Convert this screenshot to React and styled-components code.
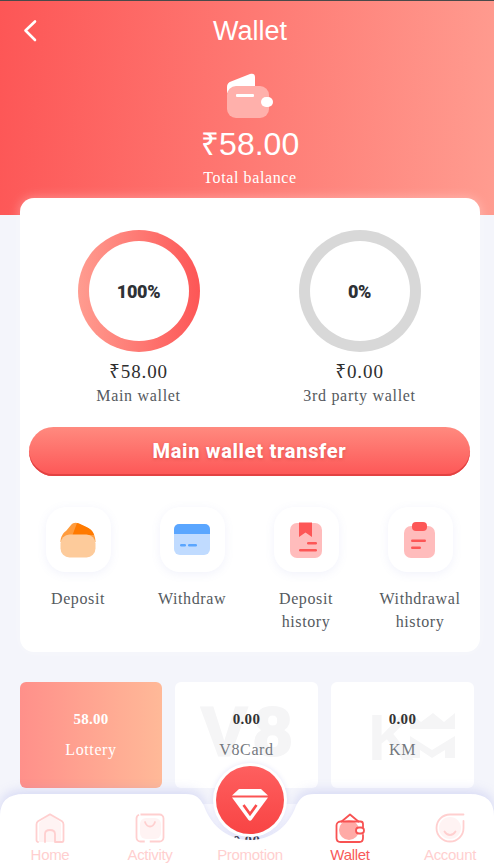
import React from 'react';
import styled, { createGlobalStyle } from 'styled-components';

const GlobalStyle = createGlobalStyle`
  html, body {
    margin: 0;
    padding: 0;
    height: 867px;
    overflow: hidden;
    background: #f4f5fb;
  }
`;

const serif = `"Liberation Serif", "Times New Roman", serif`;
const sans = `"Liberation Sans", Arial, sans-serif`;
const din = `Roboto, "Liberation Sans", sans-serif`;

const Page = styled.div`
  position: relative;
  width: 494px;
  height: 867px;
  overflow: hidden;
  background: #f4f5fb;
`;

const Header = styled.header`
  box-sizing: border-box;
  height: 215px;
  padding-left: 6px;
  border-top: 1px solid #4a4a4a;
  background: linear-gradient(94deg, #fd5656 0%, #ff9c90 100%);
  color: #fff;
  display: flex;
  flex-direction: column;
  align-items: center;
`;

const TitleBar = styled.div`
  position: relative;
  width: 100%;
  height: 60px;
  display: flex;
  align-items: center;
  justify-content: center;
`;

const BackButton = styled.button`
  position: absolute;
  left: 12px;
  top: 15px;
  width: 24px;
  height: 30px;
  padding: 0;
  border: 0;
  background: none;
  display: flex;
  align-items: center;
  justify-content: center;
`;

const Title = styled.h1`
  margin: 0;
  font: 400 27px/60px ${sans};
`;

const Rupee = styled.span`
  font-family: "Noto Sans", ${sans};
  line-height: 0;
`;

const Balance = styled.div`
  margin-top: 7px;
  font: 400 32px/38px ${sans};
`;

const BalanceLabel = styled.div`
  margin-top: 5px;
  font: 400 16px/20px ${serif};
  letter-spacing: 0.6px;
`;

const WalletCard = styled.section`
  position: relative;
  box-sizing: border-box;
  width: 460px;
  height: 454px;
  margin: -17px 0 0 20px;
  padding-top: 32px;
  background: #fff;
  border-radius: 14px;
  box-shadow: 0 0 12px rgba(255, 255, 255, 0.35);
`;

const RingRow = styled.div`
  display: grid;
  grid-template-columns: 221px 221px;
  padding-left: 8px;
`;

const RingColumn = styled.div`
  display: flex;
  flex-direction: column;
  align-items: center;
`;

const Ring = styled.div`
  box-sizing: border-box;
  width: 122px;
  height: 122px;
  padding: 11px;
  border-radius: 50%;
  background: ${(p) => (p.$active ? 'linear-gradient(90deg, #ff9c90, #fd5656)' : '#d8d8d8')};
`;

const RingInner = styled.div`
  width: 100%;
  height: 100%;
  border-radius: 50%;
  background: #fff;
  display: flex;
  align-items: center;
  justify-content: center;
  font: 900 18px ${din};
  letter-spacing: -0.3px;
  color: #2e3136;
`;

const Amount = styled.div`
  margin-top: 8px;
  font: 400 19px/24px ${serif};
  letter-spacing: 0.9px;
  color: #2f2f2f;
`;

const WalletName = styled.div`
  margin-top: 2px;
  font: 400 16px/20px ${serif};
  letter-spacing: 0.7px;
  color: #555a60;
`;

const TransferButton = styled.button`
  display: block;
  box-sizing: border-box;
  width: 441px;
  height: 49px;
  margin: 21px 0 0 9px;
  padding: 0 0 2px;
  border: 0;
  border-radius: 25px;
  background: linear-gradient(180deg, #ff8a7f 0%, #fd5656 100%);
  box-shadow: inset 0 -2px 0 #e24242;
  color: #fff;
  font: 800 20px ${din};
  letter-spacing: 0.7px;
  text-shadow: 0 1px 3px rgba(200, 50, 50, 0.5);
`;

const ActionRow = styled.div`
  display: grid;
  grid-template-columns: repeat(4, 114px);
  padding: 31px 0 0 1px;
`;

const Action = styled.div`
  display: flex;
  flex-direction: column;
  align-items: center;
`;

const ActionTile = styled.div`
  width: 65px;
  height: 65px;
  border-radius: 20px;
  background: #fff;
  box-shadow: 0 2px 10px rgba(120, 130, 220, 0.1);
  display: flex;
  align-items: center;
  justify-content: center;
`;

const ActionLabel = styled.div`
  margin-top: 15px;
  width: 100px;
  text-align: center;
  font: 400 16px/23px ${serif};
  letter-spacing: 0.6px;
  color: #555a60;
`;

const GameGrid = styled.div`
  display: grid;
  grid-template-columns: 142px 143px 143px;
  grid-auto-rows: 106px;
  gap: 16px 13px;
  margin: 30px 20px 0;
`;

const GameCard = styled.div`
  position: relative;
  overflow: hidden;
  border-radius: 6px;
  background: ${(p) => (p.$active ? 'linear-gradient(90deg, #ff908a, #ffb998)' : '#fff')};
  color: ${(p) => (p.$active ? '#fff' : '#333')};
  text-align: center;
  font-family: ${serif};
`;

const GameWatermark = styled.div`
  position: absolute;
  top: 13px;
  left: 0;
  right: 0;
  text-indent: 7px;
  text-align: center;
  font: 900 68px/72px ${sans};
  letter-spacing: 7px;
  -webkit-text-stroke: 3px #f5f5f6;
  color: #f5f5f6;
`;

const KmLetter = styled.div`
  position: absolute;
  left: 37px;
  top: 20px;
  font: 900 64px/72px ${sans};
  color: #f5f5f6;
`;

const KmMark = styled.svg`
  position: absolute;
  left: 79px;
  top: 31px;
`;

const GameValue = styled.div`
  position: relative;
  margin-top: 27px;
  font-size: 15px;
  font-weight: 700;
  line-height: 20px;
  letter-spacing: 0.3px;
`;

const GameName = styled.div`
  position: relative;
  margin-top: 10px;
  font-size: 16px;
  line-height: 22px;
  letter-spacing: 0.6px;
  color: ${(p) => (p.$active ? '#fff' : '#74787e')};
`;

const Nav = styled.nav`
  position: absolute;
  left: 0;
  bottom: 0;
  width: 494px;
  height: 73px;
  display: grid;
  grid-template-columns: repeat(5, 100px);
`;

const NavShape = styled.svg`
  position: absolute;
  left: 0;
  top: 0;
  filter: drop-shadow(0 -3px 6px rgba(105, 115, 225, 0.22));
`;

const NavItem = styled.div`
  position: relative;
  display: flex;
  flex-direction: column;
  align-items: center;
  padding-top: 19px;
  font: 400 15px/18px ${sans};
  letter-spacing: -0.3px;
  color: ${(p) => (p.$active ? '#f85a5a' : '#ffcfcf')};
`;

const NavIcon = styled.svg`
  display: block;
  margin-bottom: 3px;
`;

const NavSpacer = styled.div`
  width: 30px;
  height: 30px;
  margin-bottom: 3px;
`;

const PromoButton = styled.div`
  position: absolute;
  left: 216px;
  top: -28px;
  width: 68px;
  height: 68px;
  border-radius: 50%;
  background: linear-gradient(180deg, #fe5f5f, #f84444);
  box-shadow: 0 0 0 3px #fff, 0 0 4px 4px rgba(120, 130, 225, 0.14);
  display: flex;
  align-items: center;
  justify-content: center;
`;

const Diamond = styled.svg`
  display: block;
  margin-top: 10px;
`;

const BackIcon = () => (
  <svg width="16" height="24" viewBox="0 0 16 24" fill="none">
    <path d="M13 2.500 3.500 11.500 13 21" stroke="#fff" strokeWidth="2.600" strokeLinecap="round" strokeLinejoin="round" />
  </svg>
);

const BalanceIcon = () => (
  <svg width="46" height="45" viewBox="0 0 46 45" style={{ display: 'block', marginTop: 12 }}>
    <path d="M0 14C0 11 1.500 9.500 4 8.500L23 1C26 0 28 1 28 4V20H0Z" fill="#fff" />
    <rect x="0" y="13" width="42" height="32" rx="9" fill="#ffb0ab" />
    <rect x="9" y="21" width="18" height="3" rx="1" fill="#fff" />
    <rect x="34" y="24" width="12" height="10" rx="5" fill="#fff" />
  </svg>
);

const DepositIcon = () => (
  <svg width="40" height="40" viewBox="0 0 40 40">
    <path d="M2.500 22C2.500 17 5 13 8 11L13 5C15 2.500 18 2 20.500 3.500L29 7.500C34.500 10 37.500 15 37.500 22Z" fill="#ff9c3e" />
    <path d="M19 3 14.500 15H36C35 11 32 8.500 28 6.800L21 3.500Z" fill="#ff7a00" />
    <rect x="2.500" y="14.500" width="35" height="23" rx="9" fill="#fdcb9b" />
  </svg>
);

const WithdrawIcon = () => (
  <svg width="40" height="40" viewBox="0 0 40 40">
    <path d="M2 9a5 5 0 0 1 5-5h26a5 5 0 0 1 5 5v5H2Z" fill="#5aa6ff" />
    <path d="M2 14h36v15a6 6 0 0 1-6 6H8a6 6 0 0 1-6-6Z" fill="#c0dbff" />
    <rect x="8" y="24" width="6" height="2.400" rx="1.200" fill="#5aa6ff" />
    <rect x="16" y="24" width="9" height="2.400" rx="1.200" fill="#5aa6ff" />
  </svg>
);

const DepositHistoryIcon = () => (
  <svg width="40" height="40" viewBox="0 0 40 40">
    <rect x="4" y="3" width="32" height="35" rx="7" fill="#ffbcbc" />
    <path d="M13 2.500H26V17L19.500 12.500 13 17Z" fill="#fd5656" />
    <rect x="21" y="22" width="10" height="2.400" rx="1.200" fill="#fd5656" />
    <rect x="13" y="29" width="18" height="2.400" rx="1.200" fill="#fd5656" />
  </svg>
);

const WithdrawHistoryIcon = () => (
  <svg width="40" height="40" viewBox="0 0 40 40">
    <rect x="4" y="6" width="31" height="32" rx="7" fill="#ffbcbc" />
    <rect x="12" y="2" width="15" height="9" rx="4" fill="#fd5656" />
    <rect x="11" y="19.500" width="15" height="2.400" rx="1.200" fill="#fd5656" />
    <rect x="11" y="26.500" width="10" height="2.400" rx="1.200" fill="#fd5656" />
  </svg>
);

const HomeIcon = () => (
  <NavIcon width="30" height="30" viewBox="0 0 30 30" fill="none">
    <path d="M4 29V11c0-1 .5-1.700 1.200-2.200L15 1.500l9.800 7.300c.7.5 1.200 1.200 1.200 2.200v18" fill="#fff3f3" stroke="none" />
    <path d="M3 29C2 29 1.500 28 1.500 27V11.500C1.500 10 2 9 3 8.300L15 1.300 27 8.300C28 9 28.500 10 28.500 11.500V27C28.500 28 28 29 27 29H20V21C20 18.500 18 17 15 17S10 18.500 10 21V29" stroke="#ffcfcf" strokeWidth="1.800" strokeLinejoin="round" strokeLinecap="round" />
  </NavIcon>
);

const ActivityIcon = () => (
  <NavIcon width="30" height="30" viewBox="0 0 30 30" fill="none">
    <rect x="5" y="5" width="21" height="21" rx="6" fill="#fff3f3" />
    <rect x="1.500" y="1.500" width="27" height="27" rx="4" stroke="#ffcfcf" strokeWidth="1.800" strokeDasharray="60 5 34" />
    <path d="M10 9C11 12 13 13.500 15 13.500S19 12 20 9" stroke="#ffcfcf" strokeWidth="1.800" strokeLinecap="round" />
  </NavIcon>
);

const WalletNavIcon = () => (
  <NavIcon width="30" height="30" viewBox="0 0 30 30" fill="none">
    <circle cx="14" cy="17" r="10" fill="#ffaaa6" />
    <path d="M6 9 15 1.500 24 9" stroke="#f85252" strokeWidth="1.800" strokeLinejoin="round" />
    <path d="M28 14V11C28 9.500 27 8.500 25.500 8.500H5.500C3 8.500 1.500 10.500 1.500 12.500V25C1.500 27.500 3 29 5.500 29H24.500C27 29 28 27.500 28 25V22" stroke="#f85252" strokeWidth="1.800" strokeLinecap="round" />
    <rect x="21" y="14.500" width="8" height="6" rx="3" fill="#fff" stroke="#f85252" strokeWidth="1.800" />
  </NavIcon>
);

const AccountIcon = () => (
  <NavIcon width="30" height="30" viewBox="0 0 30 30" fill="none">
    <circle cx="15" cy="15" r="11" fill="#fff3f3" />
    <path d="M28.500 1.500H15C7.500 1.500 1.500 7.500 1.500 15S7.500 28.500 15 28.500 28.500 22.500 28.500 15V8" stroke="#ffcfcf" strokeWidth="1.800" strokeLinecap="round" />
    <path d="M9.500 18.500C11 21 13 22 15 22S19 21 20.500 18.500" stroke="#ffcfcf" strokeWidth="1.800" strokeLinecap="round" />
  </NavIcon>
);

const DiamondIcon = () => (
  <Diamond width="36" height="32" viewBox="0 0 36 32">
    <path d="M7 0H29L36 6.500H0Z" fill="#fff" />
    <path d="M0 8.500H36L19.500 31C18.700 32 17.300 32 16.500 31Z" fill="#fff" />
    <path d="M11.500 16 18 25 24.500 16" fill="none" stroke="#fa4c4c" strokeWidth="2.600" />
  </Diamond>
);

const KmLogo = () => (
  <KmMark width="46" height="46" viewBox="0 0 46 46">
    <path d="M0 0 11 9 23 0 34 9 45 0V16H0Z" fill="#f5f5f6" />
    <path d="M0 23 22 37 45 23V45H35V37L22 45 10 37V45H0Z" fill="#f5f5f6" />
  </KmMark>
);

const rings = [
  { pct: '100%', amount: '58.00', name: 'Main wallet', active: true },
  { pct: '0%', amount: '0.00', name: '3rd party wallet' },
];

const actions = [
  { label: 'Deposit', icon: <DepositIcon /> },
  { label: 'Withdraw', icon: <WithdrawIcon /> },
  { label: 'Deposit history', icon: <DepositHistoryIcon /> },
  { label: 'Withdrawal history', icon: <WithdrawHistoryIcon /> },
];

export default function App() {
  return (
    <Page>
      <GlobalStyle />
      <Header>
        <TitleBar>
          <BackButton aria-label="Back">
            <BackIcon />
          </BackButton>
          <Title>Wallet</Title>
        </TitleBar>
        <BalanceIcon />
        <Balance><Rupee>₹</Rupee>58.00</Balance>
        <BalanceLabel>Total balance</BalanceLabel>
      </Header>

      <WalletCard>
        <RingRow>
          {rings.map((r) => (
            <RingColumn key={r.name}>
              <Ring $active={r.active}>
                <RingInner>{r.pct}</RingInner>
              </Ring>
              <Amount><Rupee>₹</Rupee>{r.amount}</Amount>
              <WalletName>{r.name}</WalletName>
            </RingColumn>
          ))}
        </RingRow>
        <TransferButton>Main wallet transfer</TransferButton>
        <ActionRow>
          {actions.map((a) => (
            <Action key={a.label}>
              <ActionTile>{a.icon}</ActionTile>
              <ActionLabel>{a.label}</ActionLabel>
            </Action>
          ))}
        </ActionRow>
      </WalletCard>

      <GameGrid>
        <GameCard $active>
          <GameValue>58.00</GameValue>
          <GameName $active>Lottery</GameName>
        </GameCard>
        <GameCard>
          <GameWatermark>V8</GameWatermark>
          <GameValue>0.00</GameValue>
          <GameName>V8Card</GameName>
        </GameCard>
        <GameCard>
          <KmLetter>K</KmLetter>
          <KmLogo />
          <GameValue>0.00</GameValue>
          <GameName>KM</GameName>
        </GameCard>
        <GameCard />
        <GameCard>
          <GameValue>0.00</GameValue>
        </GameCard>
        <GameCard />
      </GameGrid>

      <Nav>
        <NavShape width="494" height="73" viewBox="0 0 494 73">
          <path
            d="M0 22Q0 0 24 0H186C196 0 200 4 204 12C212 34 230 46 250 46S288 34 296 12C300 4 304 0 314 0H470Q494 0 494 22V73H0Z"
            fill="#fff"
          />
        </NavShape>
        <NavItem>
          <HomeIcon />
          Home
        </NavItem>
        <NavItem>
          <ActivityIcon />
          Activity
        </NavItem>
        <NavItem>
          <NavSpacer />
          Promotion
        </NavItem>
        <NavItem $active>
          <WalletNavIcon />
          Wallet
        </NavItem>
        <NavItem>
          <AccountIcon />
          Account
        </NavItem>
        <PromoButton>
          <DiamondIcon />
        </PromoButton>
      </Nav>
    </Page>
  );
}
